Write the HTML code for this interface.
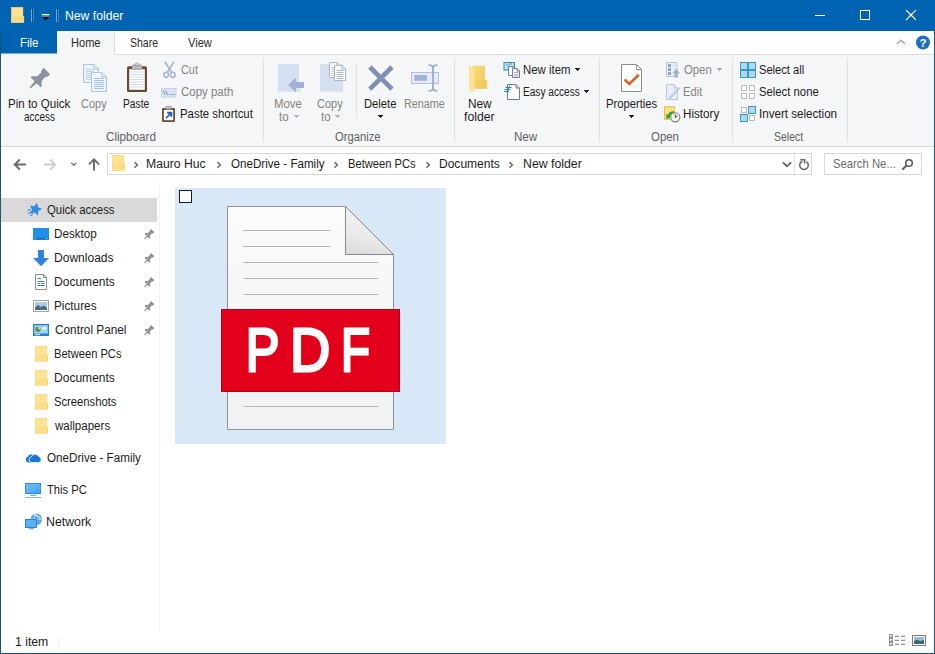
<!DOCTYPE html>
<html lang="en"><head><meta charset="utf-8"><title>New folder</title>
<style>
html,body{margin:0;padding:0}
body{width:935px;height:654px;position:relative;overflow:hidden;background:#fff;font-family:"Liberation Sans",sans-serif;font-size:12px;line-height:14px}
.b{position:absolute}
.i{position:absolute;overflow:visible}
.t{position:absolute;white-space:pre;height:14px;transform-origin:0 0}
</style></head><body>
<div class="b" style="left:0px;top:0px;width:935px;height:31px;background:#0063b1;"></div>
<div class="b" style="left:0px;top:31px;width:935px;height:23px;background:#ffffff;"></div>
<div class="b" style="left:0px;top:31px;width:57px;height:22px;background:#0063b1;"></div>
<div class="b" style="left:0px;top:53px;width:57px;height:1px;background:#7badd4;"></div>
<div class="b" style="left:0px;top:54px;width:935px;height:92px;background:#f5f6f7;"></div>
<div class="b" style="left:57px;top:31px;width:57px;height:24px;background:#f5f6f7;"></div>
<div class="b" style="left:114px;top:32px;width:1px;height:22px;background:#dadbdc;"></div>
<div class="b" style="left:115px;top:54px;width:820px;height:1px;background:#dadbdc;"></div>
<div class="b" style="left:0px;top:146px;width:935px;height:1px;background:#d6d7d8;"></div>
<div class="b" style="left:0px;top:147px;width:935px;height:507px;background:#ffffff;"></div>
<div class="b" style="left:263px;top:58px;width:1px;height:84px;background:#e1e2e3;"></div>
<div class="b" style="left:454px;top:58px;width:1px;height:84px;background:#e1e2e3;"></div>
<div class="b" style="left:599px;top:58px;width:1px;height:84px;background:#e1e2e3;"></div>
<div class="b" style="left:732px;top:58px;width:1px;height:84px;background:#e1e2e3;"></div>
<div class="b" style="left:847px;top:58px;width:1px;height:84px;background:#e1e2e3;"></div>
<div class="b" style="left:356px;top:64px;width:1px;height:54px;background:#e1e2e3;"></div>
<svg class="i" style="left:11px;top:7px" width="14" height="17" viewBox="0 0 14 17" ><rect x=".3" y=".3" width="11.6" height="15.299999999999999" fill="#fde391" stroke="#f3d678" stroke-width=".6"/><rect x="0" y="9.1" width="12" height="6.6" fill="#fbd97f" opacity=".55"/><rect x="11.9" y="8.9" width="1.2" height="6.8" fill="#f9db74"/></svg>
<div class="b" style="left:31px;top:9px;width:1px;height:13px;background:rgba(255,255,255,.45);"></div>
<div class="b" style="left:32px;top:9px;width:1px;height:13px;background:rgba(0,40,90,.35);"></div>
<div class="b" style="left:33px;top:9px;width:1px;height:13px;background:rgba(255,255,255,.25);"></div>
<div class="b" style="left:56px;top:9px;width:1px;height:13px;background:rgba(255,255,255,.45);"></div>
<div class="b" style="left:57px;top:9px;width:1px;height:13px;background:rgba(0,40,90,.35);"></div>
<div class="b" style="left:58px;top:9px;width:1px;height:13px;background:rgba(255,255,255,.25);"></div>
<svg class="i" style="left:41px;top:13px" width="10" height="8" viewBox="0 0 10 8" ><rect x=".8" y="1" width="7.6" height="1.3" fill="#fff"/><path d="M.6 3.4h8l-4 4z" fill="#1a1030"/><path d="M.6 3.4h8" stroke="#d8c8c8" stroke-width=".5"/></svg>
<svg class="i" style="left:810px;top:5px" width="110" height="20" viewBox="0 0 110 20" ><path d="M5 10.5h10" stroke="#fff" stroke-width="1"/><rect x="50.5" y="5.5" width="9" height="9" fill="none" stroke="#fff" stroke-width="1"/><path d="M96 5l10 10M106 5l-10 10" stroke="#fff" stroke-width="1.1"/></svg>
<svg class="i" style="left:896px;top:38px" width="10" height="8" viewBox="0 0 10 8" ><path d="M1 6l4-4 4 4" fill="none" stroke="#9c9c9c" stroke-width="1.2"/></svg>
<svg class="i" style="left:915px;top:35px" width="16" height="16" viewBox="0 0 16 16" ><circle cx="8" cy="7.5" r="7" fill="#1d6fc0"/><text x="8" y="11.6" font-family="Liberation Sans, sans-serif" font-weight="bold" font-size="11.5" fill="#fff" text-anchor="middle">?</text></svg>
<svg class="i" style="left:28px;top:66px" width="24" height="24" viewBox="0 0 24 24" ><path d="M2.42 22.42L8.65 17.33L12.61 21.29L13.88 20.02L13.46 17.62L14.02 14.50L17.27 10.97L19.61 10.76L22.15 8.21L15.79 1.85L13.24 4.39L13.03 6.73L9.50 9.98L6.38 10.54L3.98 10.12L2.71 11.39L6.67 15.35L1.58 21.58Z" fill="#8b949e"/></svg>
<svg class="i" style="left:82px;top:63px" width="26" height="30" viewBox="0 0 26 30" ><path d="M1.5 1.5h10.5l4.5 4.5v13.5h-15z" fill="#eaf1fb" stroke="#b3c3d8" stroke-width="1"/><path d="M12.0 1.5v4.5h4.5" fill="none" stroke="#b3c3d8" stroke-width="1"/><path d="M4 6.5H12" stroke="#bfd2ea" stroke-width="1"/><path d="M4 8.5H12" stroke="#bfd2ea" stroke-width="1"/><path d="M4 10.5H12" stroke="#bfd2ea" stroke-width="1"/><path d="M4 12.5H12" stroke="#bfd2ea" stroke-width="1"/><path d="M4 14.5H12" stroke="#bfd2ea" stroke-width="1"/><path d="M4 16.5H12" stroke="#bfd2ea" stroke-width="1"/><path d="M9.5 9.5h10.5l4.5 4.5v14.5h-15z" fill="#eef4fc" stroke="#b3c3d8" stroke-width="1"/><path d="M20.0 9.5v4.5h4.5" fill="none" stroke="#b3c3d8" stroke-width="1"/><path d="M12 15.5H22" stroke="#a9c2e0" stroke-width="1"/><path d="M12 17.5H22" stroke="#a9c2e0" stroke-width="1"/><path d="M12 19.5H22" stroke="#a9c2e0" stroke-width="1"/><path d="M12 21.5H22" stroke="#a9c2e0" stroke-width="1"/><path d="M12 23.5H22" stroke="#a9c2e0" stroke-width="1"/><path d="M12 25.5H22" stroke="#a9c2e0" stroke-width="1"/></svg>
<svg class="i" style="left:125px;top:62px" width="24" height="31" viewBox="0 0 24 31" ><rect x="2" y="4.2" width="20" height="25.8" rx="1.6" fill="#6b4a2f"/><rect x="4.2" y="7.2" width="15.600" height="20.600" fill="#ffffff"/><path d="M4.2 10H19.8" stroke="#c9dbf1" stroke-width="1"/><path d="M4.2 12.5H19.8" stroke="#c9dbf1" stroke-width="1"/><path d="M4.2 15H19.8" stroke="#c9dbf1" stroke-width="1"/><path d="M4.2 17.5H19.8" stroke="#c9dbf1" stroke-width="1"/><path d="M4.2 20H19.8" stroke="#c9dbf1" stroke-width="1"/><path d="M4.2 22.5H19.8" stroke="#c9dbf1" stroke-width="1"/><path d="M4.2 25H19.8" stroke="#c9dbf1" stroke-width="1"/><rect x="7" y="3" width="10" height="4.4" rx="1" fill="#bdbdbd" stroke="#8f8f8f" stroke-width=".6"/><rect x="10.2" y="1.200" width="3.600" height="3" rx="1.200" fill="none" stroke="#9a9a9a" stroke-width=".9"/></svg>
<svg class="i" style="left:162px;top:61px" width="15" height="18" viewBox="0 0 15 18" ><path d="M3.2 1.2L9.6 11.2M11.8 1.2L5.4 11.2" stroke="#a6b7d4" stroke-width="1.7" fill="none" stroke-linecap="round"/><ellipse cx="4.2" cy="13.8" rx="2.3" ry="2.6" fill="none" stroke="#a6b7d4" stroke-width="1.6"/><ellipse cx="10.8" cy="13.8" rx="2.3" ry="2.6" fill="none" stroke="#a6b7d4" stroke-width="1.6"/></svg>
<svg class="i" style="left:161px;top:88px" width="16" height="10" viewBox="0 0 16 10" ><rect x=".5" y=".5" width="14.5" height="8.5" fill="#d9e3f3" stroke="#c5d2e8"/><path d="M2.2 2.5l2 4.5M4.7 2.5l2 4.5" stroke="#7f97bf" stroke-width="1"/><path d="M8 6.5h1.3M10.2 6.5h1.3M12.4 6.5h1.3" stroke="#7f97bf" stroke-width="1.2"/></svg>
<svg class="i" style="left:161px;top:105px" width="16" height="18" viewBox="0 0 16 18" ><rect x="1" y="3" width="13" height="14" rx="1.3" fill="#6f4c30"/><rect x="2.8" y="5" width="9.4" height="10.2" fill="#fff"/><rect x="4.5" y="1.3" width="6" height="3" rx=".8" fill="#b5b5b5" stroke="#8a8a8a" stroke-width=".5"/><path d="M5 13.2l3.6-3.6M6.2 7.6h4.2v4.2" fill="none" stroke="#2b62ad" stroke-width="1.7"/><path d="M10.6 7.4v4.6l-4.6-4.6z" fill="#2b62ad"/></svg>
<svg class="i" style="left:277px;top:63px" width="28" height="31" viewBox="0 0 28 31" ><rect x="1" y="1.2" width="21" height="27.5" fill="#d6dff0"/><rect x="22" y="19" width="2" height="9.7" fill="#dfe6f3"/><path d="M11 22L19 14.5V19H27V25H19V29.6z" fill="#a2b2d3"/></svg>
<svg class="i" style="left:319px;top:61px" width="28" height="32" viewBox="0 0 28 32" ><rect x="1" y="3.2" width="23" height="27.5" fill="#d6dff0"/><path d="M10.5 1.5h7.5l3.5 3.5v11.5h-11z" fill="#ffffff" stroke="#a9b6cb" stroke-width="1"/><path d="M18.0 1.5v3.5h3.5" fill="none" stroke="#a9b6cb" stroke-width="1"/><path d="M12.5 6.5H19" stroke="#c4cddd" stroke-width="1"/><path d="M12.5 8.5H19" stroke="#c4cddd" stroke-width="1"/><path d="M12.5 10.5H19" stroke="#c4cddd" stroke-width="1"/><path d="M12.5 12.5H19" stroke="#c4cddd" stroke-width="1"/><path d="M12.5 14.5H19" stroke="#c4cddd" stroke-width="1"/><path d="M15.5 4.5h7.5l3.5 3.5v11.5h-11z" fill="#ffffff" stroke="#a9b6cb" stroke-width="1"/><path d="M23.0 4.5v3.5h3.5" fill="none" stroke="#a9b6cb" stroke-width="1"/><path d="M17.5 9.5H24.5" stroke="#a9b6cb" stroke-width="1"/><path d="M17.5 11.5H24.5" stroke="#a9b6cb" stroke-width="1"/><path d="M17.5 13.5H24.5" stroke="#a9b6cb" stroke-width="1"/><path d="M17.5 15.5H24.5" stroke="#a9b6cb" stroke-width="1"/><path d="M17.5 17.5H24.5" stroke="#a9b6cb" stroke-width="1"/></svg>
<svg class="i" style="left:366px;top:63px" width="30" height="30" viewBox="0 0 30 30" ><path d="M3.8 4L26 26.2M26 4L3.8 26.2" stroke="#7e8fb6" stroke-width="4.6" fill="none"/></svg>
<svg class="i" style="left:410px;top:63px" width="30" height="30" viewBox="0 0 30 30" ><rect x="1.5" y="9.5" width="27" height="11" fill="#e6ecf7" stroke="#b3c0d9"/><rect x="4.3" y="12" width="12.6" height="5.8" fill="#a3b3d2"/><path d="M23 3v24M18.5 2c2.6 0 4 .6 4.5 2.2C23.500 2.600 24.900 2 27.500 2M18.500 28c2.600 0 4-.6 4.500-2.200C23.500 27.400 24.900 28 27.500 28" fill="none" stroke="#97a6c4" stroke-width="1.7"/></svg>
<svg class="i" style="left:468px;top:64px" width="21" height="30" viewBox="0 0 21 30" ><defs><linearGradient id="nf" x1="0" y1="0" x2="1" y2="1"><stop offset="0" stop-color="#f9dc7e"/><stop offset="1" stop-color="#efc655"/></linearGradient></defs><rect x="4.5" y="1.8" width="12.5" height="23" fill="url(#nf)"/><rect x="17" y="16" width="2.2" height="8.800" fill="#f1cb5c"/><path d="M1 1.600L6.800 4.200L6.200 26.500L3.800 28.300L1 25z" fill="#fbe391"/></svg>
<svg class="i" style="left:503px;top:61px" width="18" height="18" viewBox="0 0 18 18" ><rect x="1" y="1.500" width="10.500" height="7.500" fill="#bfe3f3" stroke="#2f8ea8" stroke-width="1"/><path d="M3 4h3M6 3h3" stroke="#2f8ea8" stroke-width=".8"/><path d="M5.5 5.5h4.5l2.5 2.5v6.5h-7z" fill="#ffffff" stroke="#6d7f92" stroke-width="1"/><path d="M10.0 5.5v2.5h2.5" fill="none" stroke="#6d7f92" stroke-width="1"/><path d="M9.5 7.5h4.5l2.5 2.5v6.5h-7z" fill="#ffffff" stroke="#6d7f92" stroke-width="1"/><path d="M14.0 7.5v2.5h2.5" fill="none" stroke="#6d7f92" stroke-width="1"/><path d="M11 11.5H15.5" stroke="#d08bb0" stroke-width="0.9"/><path d="M11 13.5H15.5" stroke="#d08bb0" stroke-width="0.9"/><path d="M11 15H15.5" stroke="#d08bb0" stroke-width="0.9"/></svg>
<svg class="i" style="left:503px;top:83px" width="18" height="18" viewBox="0 0 18 18" ><path d="M4.5 1.5h8.5l3.5 3.5v11.5h-12z" fill="#ffffff" stroke="#6f7d8b" stroke-width="1"/><path d="M13.0 1.5v3.5h3.5" fill="none" stroke="#6f7d8b" stroke-width="1"/><path d="M2.500 4.500h6M1.500 6.500h6M1 8.500h5" stroke="#1f8ea6" stroke-width="1"/><path d="M6.500 3l-2.500 7" stroke="#1f8ea6" stroke-width="1"/></svg>
<svg class="i" style="left:620px;top:63px" width="24" height="30" viewBox="0 0 24 30" ><path d="M1.5 1.5h15l5 5v22h-20z" fill="#ffffff" stroke="#8c8c8c" stroke-width="1"/><path d="M16.5 1.5v5h5" fill="none" stroke="#8c8c8c" stroke-width="1"/><path d="M4.500 16.500L9.300 21L18.800 11.800" fill="none" stroke="#d2682c" stroke-width="2.700"/></svg>
<svg class="i" style="left:665px;top:61px" width="16" height="18" viewBox="0 0 16 18" ><rect x="1.500" y="1.500" width="10.500" height="14" fill="#e9eef7" stroke="#b7c4dc"/><rect x="3" y="3" width="3" height="3" fill="#93a5c9"/><rect x="3" y="7" width="3" height="3" fill="#93a5c9"/><rect x="3" y="11" width="3" height="3" fill="#93a5c9"/><path d="M7.500 4.500h3.500" stroke="#c5d0e4"/><path d="M11.200 7.800L15 12.300H12.900V16.500H9.500V12.300H7.400z" fill="#9fb0d0"/></svg>
<svg class="i" style="left:665px;top:83px" width="16" height="18" viewBox="0 0 16 18" ><path d="M1.5 1.5h7.5l3.5 3.5v11.5h-11z" fill="#e9eff8" stroke="#b7c4dc" stroke-width="1"/><path d="M9.0 1.5v3.5h3.5" fill="none" stroke="#b7c4dc" stroke-width="1"/><path d="M13.800 4.500L5 13.800L4 15.500L6 14.800L14.800 5.500z" fill="#c9d3e6" stroke="#aebbd3" stroke-width=".8"/></svg>
<svg class="i" style="left:663px;top:105px" width="18" height="18" viewBox="0 0 18 18" ><rect x="1.400" y="1.700" width="10.200" height="12.600" fill="#fbe07f" stroke="#ecb64f" stroke-width=".9"/><path d="M11 6.300C7.500 6.300 5.300 8 4.900 9.900L3 9.100L3.500 14L8.300 12.300L6.700 11.400C7.200 9.700 8.700 8.600 11 8.500z" fill="#2fa32a"/><circle cx="12.300" cy="12.300" r="4.600" fill="#f4f4f4" stroke="#7d7d7d" stroke-width="1.100"/><path d="M12.300 9.300V12.500L14.500 10.800" fill="none" stroke="#3d4a3d" stroke-width="1"/></svg>
<svg class="i" style="left:740px;top:62px" width="17" height="16" viewBox="0 0 17 16" ><rect x="0.5" y="0.5" width="7" height="7" fill="#a8d9f8" stroke="#3d9ab6"/><rect x="8.5" y="0.5" width="7" height="7" fill="#a8d9f8" stroke="#3d9ab6"/><rect x="0.5" y="8.5" width="7" height="7" fill="#a8d9f8" stroke="#3d9ab6"/><rect x="8.5" y="8.5" width="7" height="7" fill="#a8d9f8" stroke="#3d9ab6"/><path d="M8 0v16M0 8h16" stroke="#3d9ab6" stroke-width="1.600"/></svg>
<svg class="i" style="left:740px;top:84px" width="17" height="16" viewBox="0 0 17 16" ><rect x="1.5" y="1.5" width="5" height="5" fill="#ffffff" stroke="#b9b9b9"/><rect x="9.5" y="1.5" width="5" height="5" fill="#ffffff" stroke="#b9b9b9"/><rect x="1.5" y="9.5" width="5" height="5" fill="#ffffff" stroke="#b9b9b9"/><rect x="9.5" y="9.5" width="5" height="5" fill="#ffffff" stroke="#b9b9b9"/></svg>
<svg class="i" style="left:740px;top:106px" width="17" height="16" viewBox="0 0 17 16" ><rect x="1.5" y="1.5" width="5" height="5" fill="#ffffff" stroke="#b9b9b9"/><rect x="9.5" y="9.5" width="5" height="5" fill="#ffffff" stroke="#b9b9b9"/><rect x="8.5" y="0.5" width="7" height="7" fill="#a8d9f8" stroke="#3d9ab6"/><rect x="0.5" y="8.5" width="7" height="7" fill="#a8d9f8" stroke="#3d9ab6"/></svg>
<div class="b" style="left:378px;top:115px;width:5px;height:1px;background:#1e1e1e;"></div><div class="b" style="left:379px;top:116px;width:3px;height:1px;background:#1e1e1e;"></div><div class="b" style="left:380px;top:117px;width:1px;height:1px;background:#1e1e1e;"></div>
<div class="b" style="left:629px;top:115px;width:5px;height:1px;background:#1e1e1e;"></div><div class="b" style="left:630px;top:116px;width:3px;height:1px;background:#1e1e1e;"></div><div class="b" style="left:631px;top:117px;width:1px;height:1px;background:#1e1e1e;"></div>
<div class="b" style="left:575px;top:68px;width:5px;height:1px;background:#1e1e1e;"></div><div class="b" style="left:576px;top:69px;width:3px;height:1px;background:#1e1e1e;"></div><div class="b" style="left:577px;top:70px;width:1px;height:1px;background:#1e1e1e;"></div>
<div class="b" style="left:584px;top:90px;width:5px;height:1px;background:#1e1e1e;"></div><div class="b" style="left:585px;top:91px;width:3px;height:1px;background:#1e1e1e;"></div><div class="b" style="left:586px;top:92px;width:1px;height:1px;background:#1e1e1e;"></div>
<div class="b" style="left:717px;top:68px;width:5px;height:1px;background:#ababab;"></div><div class="b" style="left:718px;top:69px;width:3px;height:1px;background:#ababab;"></div><div class="b" style="left:719px;top:70px;width:1px;height:1px;background:#ababab;"></div>
<div class="b" style="left:294px;top:115px;width:5px;height:1px;background:#b4b4b4;"></div><div class="b" style="left:295px;top:116px;width:3px;height:1px;background:#b4b4b4;"></div><div class="b" style="left:296px;top:117px;width:1px;height:1px;background:#b4b4b4;"></div>
<div class="b" style="left:335px;top:115px;width:5px;height:1px;background:#b4b4b4;"></div><div class="b" style="left:336px;top:116px;width:3px;height:1px;background:#b4b4b4;"></div><div class="b" style="left:337px;top:117px;width:1px;height:1px;background:#b4b4b4;"></div>
<div class="b" style="left:107px;top:153px;width:705px;height:22px;background:#ffffff;border:1px solid #d9d9d9;box-sizing:border-box;"></div>
<div class="b" style="left:794px;top:154px;width:1px;height:20px;background:#e3e3e3;"></div>
<div class="b" style="left:824px;top:153px;width:98px;height:22px;background:#ffffff;border:1px solid #d9d9d9;box-sizing:border-box;"></div>
<svg class="i" style="left:12px;top:157px" width="90" height="15" viewBox="0 0 90 15" ><path d="M14 7.500H2.800M7.800 2.500L2.800 7.500L7.800 12.500" fill="none" stroke="#6a6a6a" stroke-width="1.900"/><path d="M32 7.500H43.200M38.200 2.500L43.200 7.500L38.200 12.500" fill="none" stroke="#cfcfcf" stroke-width="1.900"/><path d="M59.300 5.800L61.800 8.300L64.300 5.800" fill="none" stroke="#7a7a7a" stroke-width="1.300"/><path d="M82 13.500V2.300M77 7.300L82 2.300L87 7.300" fill="none" stroke="#6a6a6a" stroke-width="1.900"/></svg>
<svg class="i" style="left:112px;top:155.2px" width="14" height="17" viewBox="0 0 14 17" ><rect x=".3" y=".3" width="11.6" height="15.2" fill="#fde391" stroke="#f3d678" stroke-width=".6"/><rect x="0" y="9.0" width="12" height="6.6" fill="#fbd97f" opacity=".55"/><rect x="11.9" y="8.8" width="1.2" height="6.8" fill="#f9db74"/></svg>
<svg class="i" style="left:132.5px;top:159.5px" width="6" height="9" viewBox="0 0 6 9" ><path d="M1.500 2.100L4.400 4.900L1.500 7.700" fill="none" stroke="#707070" stroke-width="1.500"/></svg>
<svg class="i" style="left:216px;top:159.5px" width="6" height="9" viewBox="0 0 6 9" ><path d="M1.500 2.100L4.400 4.900L1.500 7.700" fill="none" stroke="#707070" stroke-width="1.500"/></svg>
<svg class="i" style="left:333px;top:159.5px" width="6" height="9" viewBox="0 0 6 9" ><path d="M1.500 2.100L4.400 4.900L1.500 7.700" fill="none" stroke="#707070" stroke-width="1.500"/></svg>
<svg class="i" style="left:424.5px;top:159.5px" width="6" height="9" viewBox="0 0 6 9" ><path d="M1.500 2.100L4.400 4.900L1.500 7.700" fill="none" stroke="#707070" stroke-width="1.500"/></svg>
<svg class="i" style="left:508px;top:159.5px" width="6" height="9" viewBox="0 0 6 9" ><path d="M1.500 2.100L4.400 4.900L1.500 7.700" fill="none" stroke="#707070" stroke-width="1.500"/></svg>
<svg class="i" style="left:781px;top:160px" width="12" height="9" viewBox="0 0 12 9" ><path d="M1.900 2.300L6 6.300L10.100 2.300" fill="none" stroke="#5e5e5e" stroke-width="1.700"/></svg>
<svg class="i" style="left:798px;top:158px" width="12" height="13" viewBox="0 0 12 13" ><path d="M8.470 3.680A4.300 4.300 0 1 1 4.180 3.300" fill="none" stroke="#666" stroke-width="1.500"/><path d="M2.400 1.700H6.600V5.500" fill="none" stroke="#666" stroke-width="1.500"/></svg>
<svg class="i" style="left:901px;top:158px" width="13" height="13" viewBox="0 0 13 13" ><circle cx="8" cy="5" r="3.300" fill="none" stroke="#555" stroke-width="1.500"/><path d="M5.600 7.400L1.300 11.700" stroke="#555" stroke-width="1.900"/></svg>
<div class="b" style="left:1px;top:198px;width:156px;height:24px;background:#d9d9d9;"></div>
<div class="b" style="left:159px;top:182px;width:1px;height:450px;background:#f3f3f3;"></div>
<svg class="i" style="left:26px;top:202px" width="17" height="16" viewBox="0 0 17 16" ><path d="M11.12 0.80L12.03 5.18L16.18 6.83L12.30 9.05L12.01 13.51L8.70 10.50L4.37 11.61L6.21 7.53L3.82 3.75L8.26 4.24Z" fill="#2f8be2"/><path d="M1.500 8.500l3.500-1.200M2.200 11.500l3.800-2M4.500 13.800l2.500-2.300" stroke="#2f8be2" stroke-width="1.100"/></svg>
<svg class="i" style="left:33px;top:228px" width="16" height="12" viewBox="0 0 16 12" ><rect x="0" y="0" width="16" height="12" fill="#1f8fe9"/><rect x="0" y="9.500" width="16" height="2.500" fill="#1a78d0"/><rect x="1.500" y="10.200" width="1.200" height="1" fill="#dff"/><rect x="13" y="10.200" width="1.200" height="1" fill="#dff"/></svg>
<svg class="i" style="left:33px;top:250px" width="16" height="17" viewBox="0 0 16 17" ><path d="M5 0h6v8h5l-8 8.300L0 8h5z" fill="#2f83dc"/></svg>
<svg class="i" style="left:34px;top:274px" width="14" height="16" viewBox="0 0 14 16" ><path d="M1.5 0.5h8l3 3v12h-11z" fill="#ffffff" stroke="#8f8f8f" stroke-width="1"/><path d="M9.5 0.5v3h3" fill="none" stroke="#8f8f8f" stroke-width="1"/><path d="M3.500 4.500h3.500" stroke="#2a9" stroke-width="1.200"/><path d="M3.500 7.500h7M3.500 11.500h7" stroke="#3a7bc8" stroke-width="1"/><path d="M3.500 9.500h3" stroke="#d77" stroke-width="1"/><path d="M7.500 9.500h3" stroke="#3a7bc8" stroke-width="1"/></svg>
<svg class="i" style="left:33px;top:300px" width="16" height="12" viewBox="0 0 16 12" ><rect x=".5" y=".5" width="15" height="11" fill="#fff" stroke="#a3a3a3"/><rect x="2" y="2" width="12" height="8" fill="#a9cdea"/><path d="M2 7.500L5 5L8 7L11 5.500L14 7.500V10H2z" fill="#4c6c78"/></svg>
<svg class="i" style="left:33px;top:324px" width="16" height="12" viewBox="0 0 16 12" ><rect x="0" y="0" width="16" height="12" fill="#1f80d8"/><rect x="1.200" y="1.200" width="13.600" height="8.300" fill="#9fd3f7"/><circle cx="5" cy="5.300" r="2.600" fill="#5a8a4a"/><path d="M5 5.300V2.700A2.600 2.600 0 0 1 7.600 5.300z" fill="#f0d060"/><rect x="9.500" y="3" width="4" height="2.500" fill="#e9f6ff"/><rect x="2" y="10" width="5" height="1.200" fill="#bfe2f8"/></svg>
<svg class="i" style="left:35px;top:346.2px" width="14" height="17" viewBox="0 0 14 17" ><rect x=".3" y=".3" width="11.6" height="15.1" fill="#fde391" stroke="#f3d678" stroke-width=".6"/><rect x="0" y="9.0" width="12" height="6.5" fill="#fbd97f" opacity=".55"/><rect x="11.9" y="8.7" width="1.2" height="6.8" fill="#f9db74"/></svg>
<svg class="i" style="left:35px;top:370.2px" width="14" height="17" viewBox="0 0 14 17" ><rect x=".3" y=".3" width="11.6" height="15.1" fill="#fde391" stroke="#f3d678" stroke-width=".6"/><rect x="0" y="9.0" width="12" height="6.5" fill="#fbd97f" opacity=".55"/><rect x="11.9" y="8.7" width="1.2" height="6.8" fill="#f9db74"/></svg>
<svg class="i" style="left:35px;top:394.2px" width="14" height="17" viewBox="0 0 14 17" ><rect x=".3" y=".3" width="11.6" height="15.1" fill="#fde391" stroke="#f3d678" stroke-width=".6"/><rect x="0" y="9.0" width="12" height="6.5" fill="#fbd97f" opacity=".55"/><rect x="11.9" y="8.7" width="1.2" height="6.8" fill="#f9db74"/></svg>
<svg class="i" style="left:35px;top:418.2px" width="14" height="17" viewBox="0 0 14 17" ><rect x=".3" y=".3" width="11.6" height="15.1" fill="#fde391" stroke="#f3d678" stroke-width=".6"/><rect x="0" y="9.0" width="12" height="6.5" fill="#fbd97f" opacity=".55"/><rect x="11.9" y="8.7" width="1.2" height="6.8" fill="#f9db74"/></svg>
<svg class="i" style="left:143px;top:228px" width="12" height="12" viewBox="0 0 12 12" ><path d="M1.41 11.21L4.52 8.67L6.50 10.65L7.14 10.01L6.93 8.81L7.21 7.25L8.84 5.48L10.00 5.38L11.28 4.11L8.09 0.92L6.82 2.20L6.72 3.36L4.95 4.99L3.39 5.27L2.19 5.06L1.55 5.70L3.53 7.68L0.99 10.79Z" fill="#8b949c"/></svg>
<svg class="i" style="left:143px;top:252px" width="12" height="12" viewBox="0 0 12 12" ><path d="M1.41 11.21L4.52 8.67L6.50 10.65L7.14 10.01L6.93 8.81L7.21 7.25L8.84 5.48L10.00 5.38L11.28 4.11L8.09 0.92L6.82 2.20L6.72 3.36L4.95 4.99L3.39 5.27L2.19 5.06L1.55 5.70L3.53 7.68L0.99 10.79Z" fill="#8b949c"/></svg>
<svg class="i" style="left:143px;top:276px" width="12" height="12" viewBox="0 0 12 12" ><path d="M1.41 11.21L4.52 8.67L6.50 10.65L7.14 10.01L6.93 8.81L7.21 7.25L8.84 5.48L10.00 5.38L11.28 4.11L8.09 0.92L6.82 2.20L6.72 3.36L4.95 4.99L3.39 5.27L2.19 5.06L1.55 5.70L3.53 7.68L0.99 10.79Z" fill="#8b949c"/></svg>
<svg class="i" style="left:143px;top:300px" width="12" height="12" viewBox="0 0 12 12" ><path d="M1.41 11.21L4.52 8.67L6.50 10.65L7.14 10.01L6.93 8.81L7.21 7.25L8.84 5.48L10.00 5.38L11.28 4.11L8.09 0.92L6.82 2.20L6.72 3.36L4.95 4.99L3.39 5.27L2.19 5.06L1.55 5.70L3.53 7.68L0.99 10.79Z" fill="#8b949c"/></svg>
<svg class="i" style="left:143px;top:324px" width="12" height="12" viewBox="0 0 12 12" ><path d="M1.41 11.21L4.52 8.67L6.50 10.65L7.14 10.01L6.93 8.81L7.21 7.25L8.84 5.48L10.00 5.38L11.28 4.11L8.09 0.92L6.82 2.20L6.72 3.36L4.95 4.99L3.39 5.27L2.19 5.06L1.55 5.70L3.53 7.68L0.99 10.79Z" fill="#8b949c"/></svg>
<svg class="i" style="left:25px;top:452px" width="17" height="11" viewBox="0 0 17 11" ><path d="M3.300 10.600a3.100 3.100 0 0 1-.4-6a3.600 3.600 0 0 1 5-1.800v7.800z" fill="#1a77d5"/><path d="M6.700 10.600a2.900 2.900 0 0 1-.4-5.700a4 4 0 0 1 7.300-.5a3 3 0 0 1 2.600 3a3.100 3.100 0 0 1-2.700 3.200z" fill="#1a77d5" stroke="#fff" stroke-width=".8"/></svg>
<svg class="i" style="left:25px;top:483px" width="17" height="16" viewBox="0 0 17 16" ><defs><linearGradient id="pc" x1="0" y1="0" x2="1" y2="1"><stop offset="0" stop-color="#7cc6fb"/><stop offset="1" stop-color="#3b9df0"/></linearGradient></defs><rect x=".5" y=".5" width="15" height="10" fill="url(#pc)" stroke="#2f8fe2"/><rect x="5" y="11.800" width="6.500" height="1" fill="#5ea4dd"/><rect x="0" y="14" width="16.500" height="1" fill="#9ab4cf"/></svg>
<svg class="i" style="left:25px;top:513px" width="17" height="17" viewBox="0 0 17 17" ><circle cx="11.300" cy="6.300" r="5.800" fill="#5aa7e8"/><path d="M11.300 .5a9 9 0 0 0 0 11.600M5.500 6.300h11.600" stroke="#cfe6fa" stroke-width=".8" fill="none"/><path d="M9 1.500c2 1 5 1.500 6.500 4" stroke="#e8f4ff" stroke-width="1.200" fill="none"/><rect x=".5" y="6.500" width="11" height="8" fill="#59b0f4" stroke="#2d86d9"/><rect x="3.500" y="15.300" width="5.500" height="1" fill="#5a94c8"/></svg>
<div class="b" style="left:175px;top:188px;width:271px;height:256px;background:#d9e8f7;"></div>
<div class="b" style="left:179px;top:190px;width:13px;height:13px;background:#ffffff;border:1px solid #1a1a1a;box-sizing:border-box;"></div>
<svg class="i" style="left:220px;top:200px" width="182" height="232" viewBox="0 0 182 232" ><defs><linearGradient id="pg" x1="0" y1="0" x2="0" y2="1"><stop offset="0" stop-color="#fbfbfc"/><stop offset="1" stop-color="#f0f1f3"/></linearGradient>
<linearGradient id="fd" x1="0.2" y1="0" x2="0" y2="1"><stop offset="0" stop-color="#f4f3f2"/><stop offset=".6" stop-color="#e9e9e9"/><stop offset="1" stop-color="#dadadb"/></linearGradient></defs>
<path d="M7.500 6.500H125.500L173.500 54.500V229.500H7.500z" fill="url(#pg)" stroke="#8e9196" stroke-width="1"/>
<path d="M125.500 6.500V54.500H173.500z" fill="url(#fd)" stroke="#85888d" stroke-width="1"/>
<path d="M23 30.500H110M23 46.500H110M23.500 62.500H158M23.500 78.500H158M23.500 94.500H158M23.500 206.500H158" stroke="#b3b5b8" stroke-width="1"/>
<rect x="1.500" y="109.500" width="178" height="82" fill="#e3001b" stroke="#b80014" stroke-width="1"/>
<g font-family="Liberation Sans, sans-serif" font-size="61.34" fill="#ffffff" stroke="#ffffff" stroke-width="2.8" stroke-linejoin="miter">
<text transform="translate(25.81 171.1) scale(.8237 1)">P</text>
<text transform="translate(70.10 171.1) scale(.9098 1)">D</text>
<text transform="translate(120.99 171.1) scale(.7749 1)">F</text>
</g></svg>
<svg class="i" style="left:889px;top:634px" width="17" height="13" viewBox="0 0 17 13" ><g fill="none" stroke="#8a8a8a" stroke-width=".9"><rect x=".5" y=".5" width="3" height="3"/><rect x=".5" y="4.500" width="3" height="3"/><rect x=".5" y="8.500" width="3" height="3"/></g><g fill="#777"><rect x="1.800" y="1.800" width="1" height="1"/><rect x="1.800" y="5.800" width="1" height="1"/><rect x="1.800" y="9.800" width="1" height="1"/></g><path d="M6 2.300h4M12 2.300h4M6 6.300h4M12 6.300h4M6 10.300h4M12 10.300h4" stroke="#777" stroke-width="1"/></svg>
<svg class="i" style="left:912px;top:635px" width="15" height="11" viewBox="0 0 15 11" ><rect x=".5" y=".5" width="13" height="10" fill="#fff" stroke="#7d7d7d"/><rect x="2" y="2" width="10" height="7" fill="#8fc0e6"/><path d="M2 6.500L5 4.500L8 6L12 5V9H2z" fill="#3f6473"/></svg>
<div class="b" style="left:58px;top:637px;width:1px;height:13px;background:#f0f0f0;"></div>
<div class="b" style="left:0px;top:31px;width:1px;height:623px;background:#1b5675;"></div>
<div class="b" style="left:934px;top:31px;width:1px;height:623px;background:#1b5675;"></div>
<div class="b" style="left:0px;top:653px;width:935px;height:1px;background:#1b5675;"></div>
<span class="t" style="left:64.88px;top:9px;color:#ffffff;transform:scaleX(1.0179)">New folder</span>
<span class="t" style="left:19.95px;top:36px;color:#ffffff;transform:scaleX(0.9500)">File</span>
<span class="t" style="left:71.23px;top:36px;color:#2b2b2b;transform:scaleX(0.9226)">Home</span>
<span class="t" style="left:130.03px;top:36px;color:#2b2b2b;transform:scaleX(0.8742)">Share</span>
<span class="t" style="left:188.40px;top:36px;color:#2b2b2b;transform:scaleX(0.9269)">View</span>
<span class="t" style="left:8.44px;top:97px;color:#1c1c1c;transform:scaleX(0.9625)">Pin to Quick</span>
<span class="t" style="left:24.40px;top:110px;color:#1c1c1c;transform:scaleX(0.8270)">access</span>
<span class="t" style="left:81.40px;top:97px;color:#838383;transform:scaleX(0.9143)">Copy</span>
<span class="t" style="left:122.55px;top:97px;color:#1c1c1c;transform:scaleX(0.8533)">Paste</span>
<span class="t" style="left:180.80px;top:63px;color:#838383;transform:scaleX(0.9053)">Cut</span>
<span class="t" style="left:180.80px;top:85px;color:#838383;transform:scaleX(0.9556)">Copy path</span>
<span class="t" style="left:179.85px;top:107px;color:#1c1c1c;transform:scaleX(0.9500)">Paste shortcut</span>
<span class="t" style="left:273.85px;top:97px;color:#838383;transform:scaleX(0.9500)">Move</span>
<span class="t" style="left:279.40px;top:110px;color:#838383;transform:scaleX(0.9600)">to</span>
<span class="t" style="left:317.40px;top:97px;color:#838383;transform:scaleX(0.9143)">Copy</span>
<span class="t" style="left:321.40px;top:110px;color:#838383;transform:scaleX(0.9600)">to</span>
<span class="t" style="left:363.86px;top:97px;color:#1c1c1c;transform:scaleX(0.9353)">Delete</span>
<span class="t" style="left:403.90px;top:97px;color:#838383;transform:scaleX(0.9000)">Rename</span>
<span class="t" style="left:467.82px;top:97px;color:#1c1c1c;transform:scaleX(0.9826)">New</span>
<span class="t" style="left:464.40px;top:110px;color:#1c1c1c;transform:scaleX(1.0200)">folder</span>
<span class="t" style="left:523.05px;top:63px;color:#1c1c1c;transform:scaleX(0.9510)">New item</span>
<span class="t" style="left:523.16px;top:85px;color:#1c1c1c;transform:scaleX(0.8424)">Easy access</span>
<span class="t" style="left:605.86px;top:97px;color:#1c1c1c;transform:scaleX(0.9370)">Properties</span>
<span class="t" style="left:684.00px;top:63px;color:#838383;transform:scaleX(0.9448)">Open</span>
<span class="t" style="left:683.07px;top:85px;color:#838383;transform:scaleX(0.9300)">Edit</span>
<span class="t" style="left:683.03px;top:107px;color:#1c1c1c;transform:scaleX(0.9722)">History</span>
<span class="t" style="left:759.07px;top:63px;color:#1c1c1c;transform:scaleX(0.9277)">Select all</span>
<span class="t" style="left:759.06px;top:85px;color:#1c1c1c;transform:scaleX(0.9419)">Select none</span>
<span class="t" style="left:759.03px;top:107px;color:#1c1c1c;transform:scaleX(0.9671)">Invert selection</span>
<span class="t" style="left:106.40px;top:130px;color:#5f6062;transform:scaleX(0.9725)">Clipboard</span>
<span class="t" style="left:334.80px;top:130px;color:#5f6062;transform:scaleX(0.9347)">Organize</span>
<span class="t" style="left:513.83px;top:130px;color:#5f6062;transform:scaleX(0.9652)">New</span>
<span class="t" style="left:651.00px;top:130px;color:#5f6062;transform:scaleX(0.9517)">Open</span>
<span class="t" style="left:773.93px;top:130px;color:#5f6062;transform:scaleX(0.8727)">Select</span>
<span class="t" style="left:146.38px;top:157px;color:#1c1c1c;transform:scaleX(1.0155)">Mauro Huc</span>
<span class="t" style="left:230.70px;top:157px;color:#1c1c1c;transform:scaleX(0.9680)">OneDrive - Family</span>
<span class="t" style="left:348.07px;top:157px;color:#1c1c1c;transform:scaleX(0.9306)">Between PCs</span>
<span class="t" style="left:438.70px;top:157px;color:#1c1c1c;transform:scaleX(1.0017)">Documents</span>
<span class="t" style="left:522.58px;top:157px;color:#1c1c1c;transform:scaleX(1.0250)">New folder</span>
<span class="t" style="left:832.86px;top:157px;color:#6d6d6d;transform:scaleX(0.9415)">Search Ne...</span>
<span class="t" style="left:46.80px;top:203px;color:#1c1c1c;transform:scaleX(0.9465)">Quick access</span>
<span class="t" style="left:53.83px;top:227px;color:#1c1c1c;transform:scaleX(0.9721)">Desktop</span>
<span class="t" style="left:53.80px;top:251px;color:#1c1c1c;transform:scaleX(1.0034)">Downloads</span>
<span class="t" style="left:53.80px;top:275px;color:#1c1c1c;transform:scaleX(1.0033)">Documents</span>
<span class="t" style="left:53.82px;top:299px;color:#1c1c1c;transform:scaleX(0.9810)">Pictures</span>
<span class="t" style="left:54.80px;top:323px;color:#1c1c1c;transform:scaleX(0.9833)">Control Panel</span>
<span class="t" style="left:53.87px;top:347px;color:#1c1c1c;transform:scaleX(0.9278)">Between PCs</span>
<span class="t" style="left:53.80px;top:371px;color:#1c1c1c;transform:scaleX(1.0033)">Documents</span>
<span class="t" style="left:53.86px;top:395px;color:#1c1c1c;transform:scaleX(0.9364)">Screenshots</span>
<span class="t" style="left:54.80px;top:419px;color:#1c1c1c;transform:scaleX(0.9614)">wallpapers</span>
<span class="t" style="left:46.80px;top:451px;color:#1c1c1c;transform:scaleX(0.9711)">OneDrive - Family</span>
<span class="t" style="left:46.80px;top:483px;color:#1c1c1c;transform:scaleX(0.9333)">This PC</span>
<span class="t" style="left:45.77px;top:515px;color:#1c1c1c;transform:scaleX(1.0279)">Network</span>
<span class="t" style="left:14.98px;top:635px;color:#1c1c1c;transform:scaleX(1.0194)">1 item</span>
</body></html>
